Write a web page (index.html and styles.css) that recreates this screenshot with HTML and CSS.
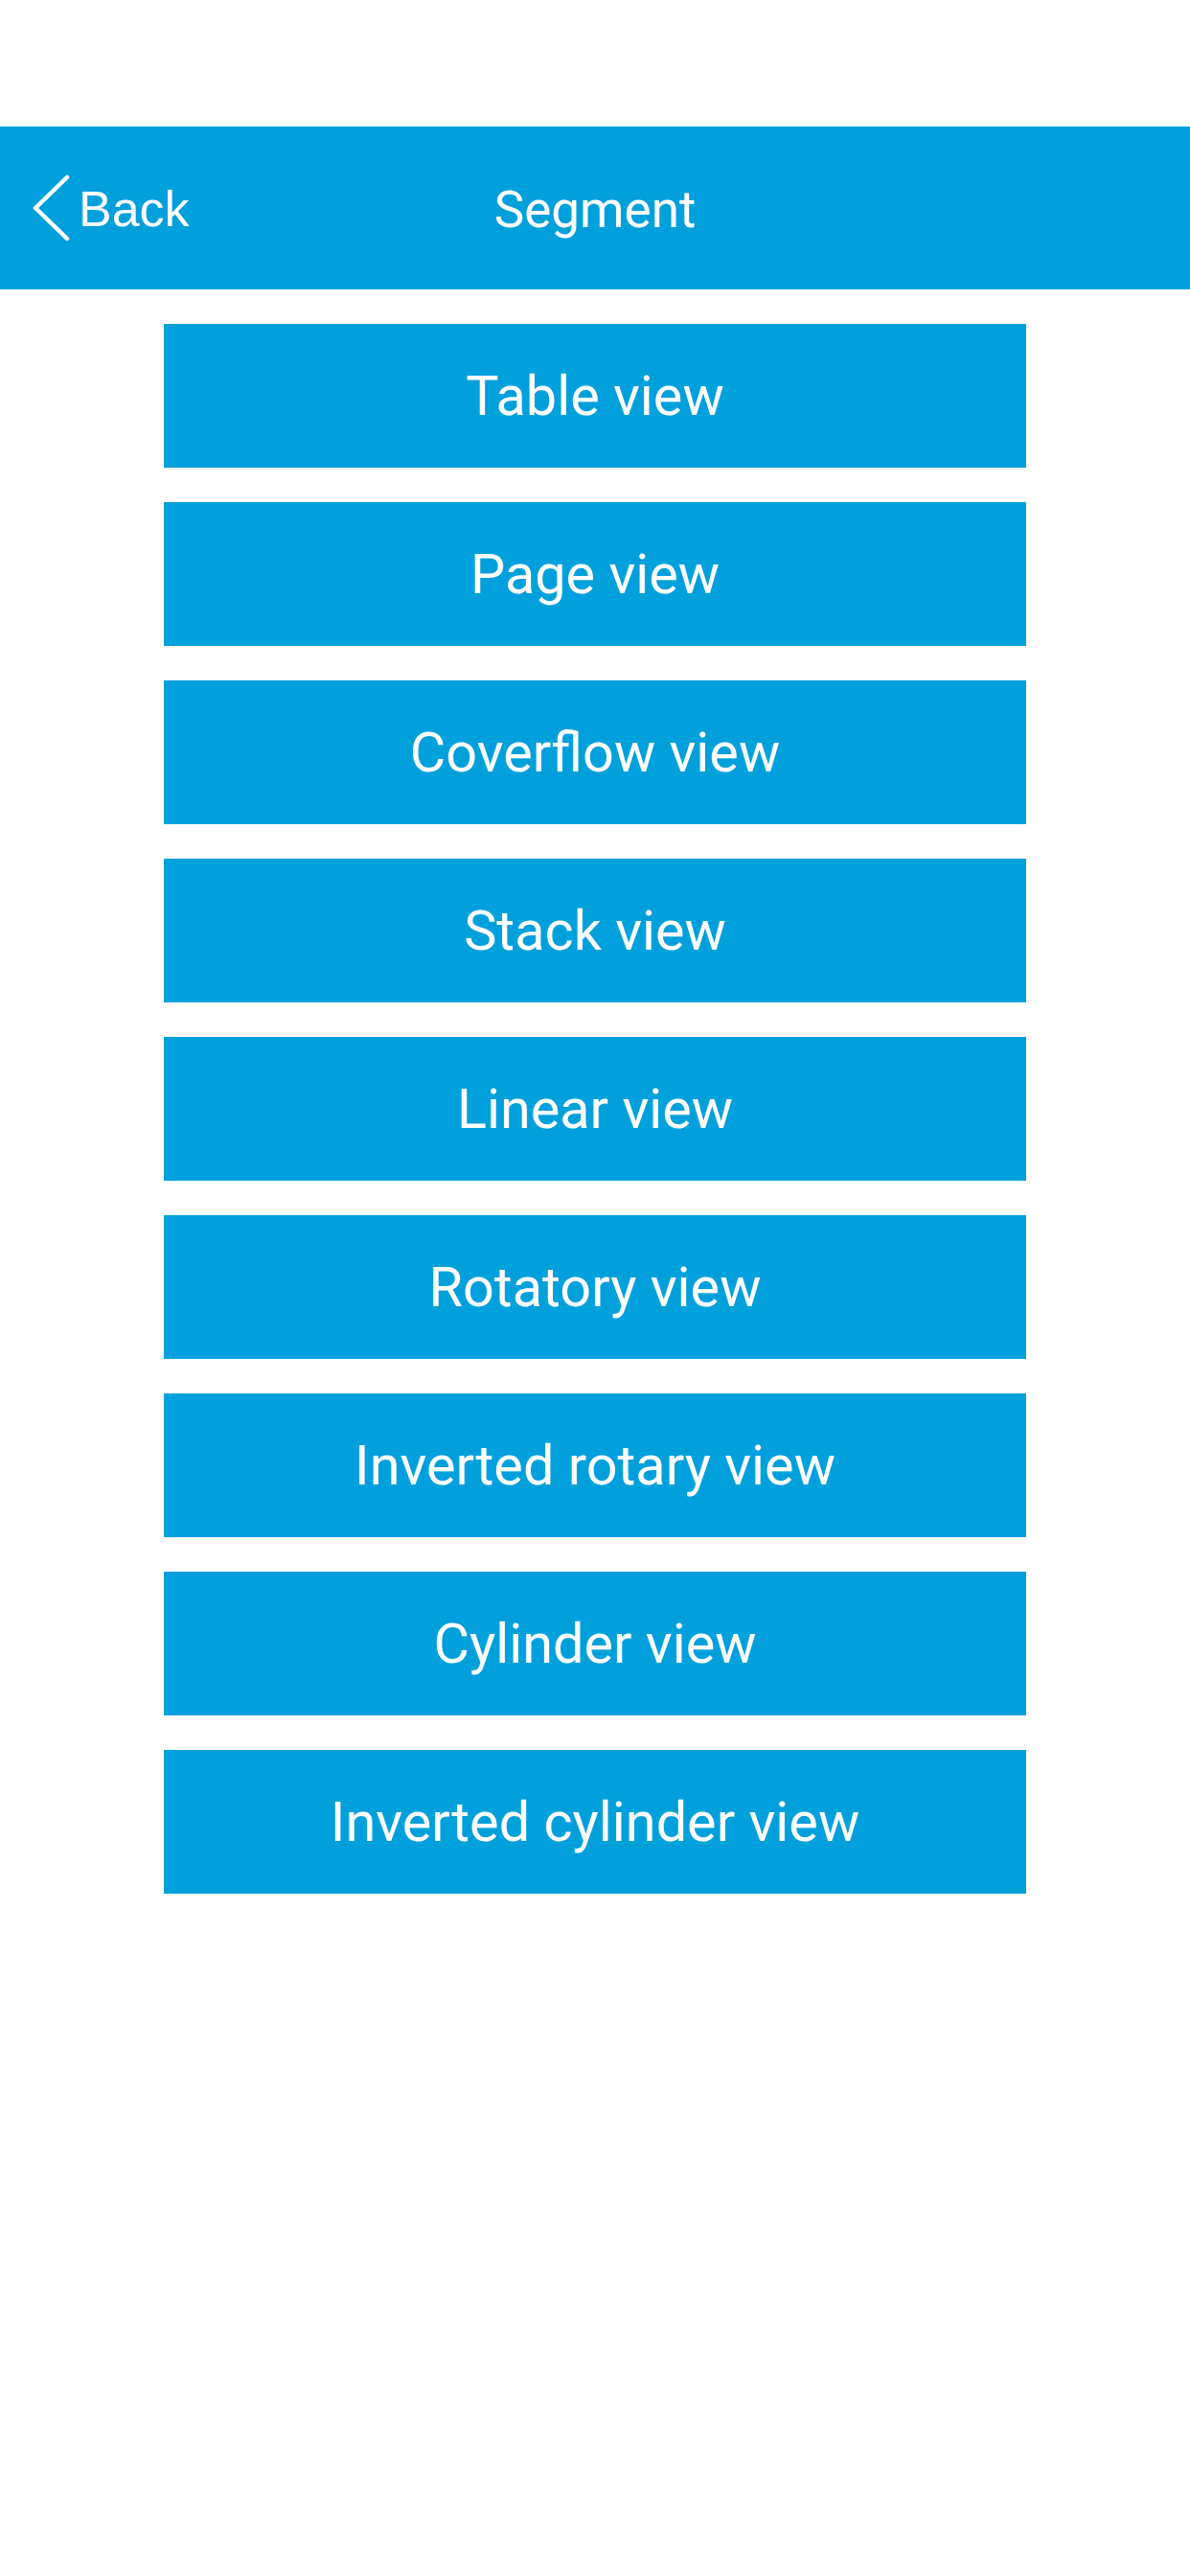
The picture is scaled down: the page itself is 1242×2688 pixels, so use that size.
FILE: index.html
```html
<!DOCTYPE html>
<html>
<head>
<meta charset="utf-8">
<link rel="stylesheet" href="styles.css">
</head>
<body>
<div class="status"></div>
<header class="nav">
  <div class="back">
    <svg class="chev" width="40" height="70" viewBox="0 0 40 70"><path d="M37 3 L4 35 L37 67" fill="none" stroke="#fff" stroke-width="4.5" stroke-linecap="round" stroke-linejoin="round"/></svg>
    <span class="back-label">Back</span>
  </div>
  <div class="title">Segment</div>
</header>
<main class="list">
  <button class="item">Table view</button>
  <button class="item">Page view</button>
  <button class="item">Coverflow view</button>
  <button class="item">Stack view</button>
  <button class="item">Linear view</button>
  <button class="item">Rotatory view</button>
  <button class="item">Inverted rotary view</button>
  <button class="item">Cylinder view</button>
  <button class="item">Inverted cylinder view</button>
</main>
</body>
</html>
```

FILE: styles.css
```css
html, body {
  margin: 0;
  padding: 0;
  background: #ffffff;
}
body {
  width: 1242px;
  height: 2688px;
  overflow: hidden;
  font-family: Roboto, "Noto Sans", sans-serif;
}
.status {
  height: 132px;
}
.nav {
  height: 170px;
  background: #00a0dc;
  position: relative;
  display: flex;
  align-items: center;
  justify-content: center;
}
.back {
  position: absolute;
  left: 33px;
  top: 50px;
  display: flex;
  align-items: center;
  height: 70px;
}
.chev {
  display: block;
}
.back-label {
  font-family: "Liberation Sans", Arial, sans-serif;
  font-size: 52px;
  color: #fff;
  margin-left: 9px;
  line-height: 1;
  position: relative;
  top: 1px;
}
.title {
  color: #fff;
  font-size: 53px;
  line-height: 1;
  position: relative;
  top: 2px;
}
.list {
  display: flex;
  flex-direction: column;
  align-items: center;
  gap: 36px;
  padding-top: 36px;
}
.item {
  width: 900px;
  height: 150px;
  border: 0;
  margin: 0;
  padding: 2px 0 0;
  background: #00a0dc;
  color: #fff;
  font-family: Roboto, "Noto Sans", sans-serif;
  font-size: 57.6px;
  line-height: 1;
  display: flex;
  align-items: center;
  justify-content: center;
}
```
